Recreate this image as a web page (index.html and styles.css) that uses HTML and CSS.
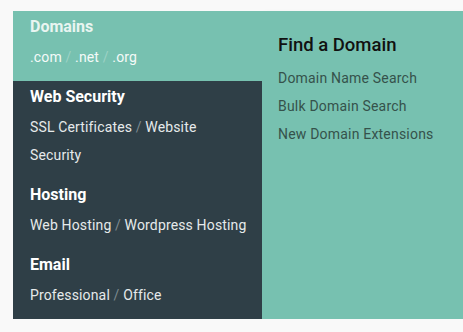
FILE: index.html
```html
<!DOCTYPE html>
<html lang="en">
<head>
    <meta charset="UTF-8">
    <meta name="viewport" content="width=device-width, initial-scale=1.0">
    <title>Products Menu</title>
    <link rel="stylesheet" href="styles.css">
</head>
<body>

    <div class="mega-menu">
        <!-- Left column: product groups -->
        <ul class="menu-groups">
            <li class="menu-group active">
                <h4>Domains</h4>
                <p class="group-links"><a href="#">.com</a> <span class="sep">/</span> <a href="#">.net</a> <span class="sep">/</span> <a href="#">.org</a></p>
            </li>
            <li class="menu-group">
                <h4>Web Security</h4>
                <p class="group-links"><a href="#">SSL Certificates</a> <span class="sep">/</span> <a href="#">Website Security</a></p>
            </li>
            <li class="menu-group">
                <h4>Hosting</h4>
                <p class="group-links"><a href="#">Web Hosting</a> <span class="sep">/</span> <a href="#">Wordpress Hosting</a></p>
            </li>
            <li class="menu-group">
                <h4>Email</h4>
                <p class="group-links"><a href="#">Professional</a> <span class="sep">/</span> <a href="#">Office</a></p>
            </li>
        </ul>

        <!-- Right panel: sub menu of the active group -->
        <div class="menu-panel">
            <h3>Find a Domain</h3>
            <ul>
                <li><a href="#">Domain Name Search</a></li>
                <li><a href="#">Bulk Domain Search</a></li>
                <li><a href="#">New Domain Extensions</a></li>
            </ul>
        </div>
    </div>

</body>
</html>
```

FILE: styles.css
```css
:root {
    --bg-color: #f9f9f9;
    --teal: #77c1b0;
    --dark: #2f3f47;
    --panel-text: #35524b;
}
body {
    font-family: 'Roboto', 'Liberation Sans', sans-serif;
    background-color: var(--bg-color);
    margin: 0;
    padding: 11px 0 0 13px;
    overflow: hidden;
}
.mega-menu {
    display: flex;
    background-color: var(--teal);
    width: 460px;
}

/* Left column */
.menu-groups {
    list-style: none;
    margin: 0;
    padding: 0;
    width: 249px;
    flex-shrink: 0;
    background-color: var(--dark);
    position: relative;
    z-index: 1;
}
.menu-group {
    padding: 5px 14px 10px 17px;
}
.menu-group.active { background-color: var(--teal); }
.menu-group h4 {
    margin: 0 0 5px 0;
    font-size: 16px;
    line-height: 22px;
    font-weight: 700;
    color: #ffffff;
}
.menu-group.active h4 { color: #e9f5f1; }
.group-links {
    margin: 0;
    font-size: 14px;
    line-height: 28px;
    letter-spacing: 0.15px;
}
.group-links a {
    color: #e6eaeb;
    text-decoration: none;
}
.group-links .sep { color: #7d8a90; }
.menu-group.active .group-links a { color: #f4faf8; }
.menu-group.active .group-links .sep { color: #9cd2c5; }

/* Right panel */
.menu-panel {
    flex: 1;
    padding: 22px 16px 0 16px;
    box-shadow: 3px 4px 4px rgba(0, 0, 0, 0.5);
}
.menu-panel h3 {
    margin: 0 0 7px 0;
    font-size: 18.5px;
    line-height: 24px;
    font-weight: 500;
    color: #111;
}
.menu-panel ul { list-style: none; margin: 0; padding: 0; }
.menu-panel a {
    font-size: 14px;
    line-height: 28px;
    letter-spacing: 0.2px;
    color: var(--panel-text);
    text-decoration: none;
}
```
